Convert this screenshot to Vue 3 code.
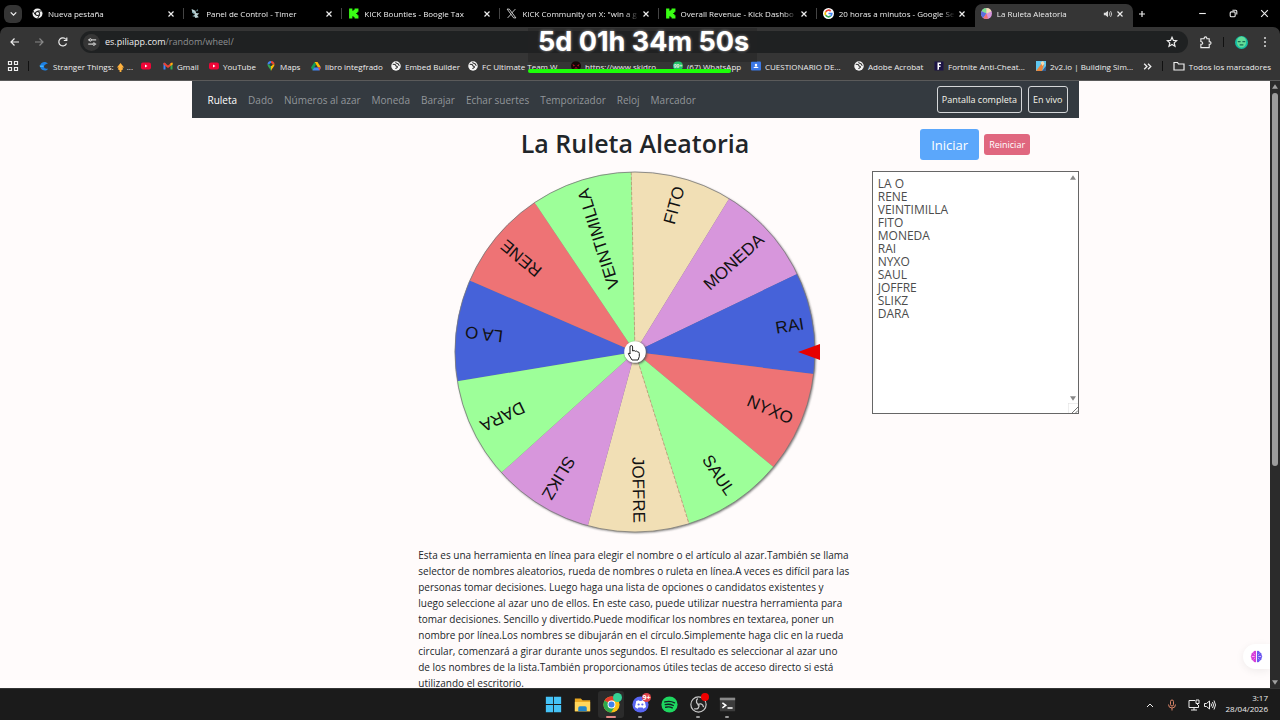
<script setup>
import { ref, computed } from 'vue'

const tabs = [
  { icon: 'chrome-mono', title: 'Nueva pestaña' },
  { icon: 'timer', title: 'Panel de Control - Timer' },
  { icon: 'kick', title: 'KICK Bounties - Boogie Tax' },
  { icon: 'x', title: 'KICK Community on X: "win a g' },
  { icon: 'kick', title: 'Overall Revenue - Kick Dashbo' },
  { icon: 'google', title: '20 horas a minutos - Google Se' },
  { icon: 'wheel', title: 'La Ruleta Aleatoria', active: true },
]

const bookmarks = [
  { icon: 'curseblue', title: 'Stranger Things: ', extra: true },
  { icon: 'youtube', title: '' },
  { icon: 'gmail', title: 'Gmail' },
  { icon: 'youtube', title: 'YouTube' },
  { icon: 'maps', title: 'Maps' },
  { icon: 'drive', title: 'libro integfrado' },
  { icon: 'globe', title: 'Embed Builder' },
  { icon: 'globe', title: 'FC Ultimate Team W...' },
  { icon: 'skull', title: 'https://www.skidro...' },
  { icon: 'whatsapp', title: '(67) WhatsApp', count: '99+' },
  { icon: 'classroom', title: 'CUESTIONARIO DE...' },
  { icon: 'globe', title: 'Adobe Acrobat' },
  { icon: 'fortnite', title: 'Fortnite Anti-Cheat...' },
  { icon: 'build', title: '2v2.io | Building Sim...' },
]

const links = ['Ruleta', 'Dado', 'Números al azar', 'Moneda', 'Barajar', 'Echar suertes', 'Temporizador', 'Reloj', 'Marcador']

const names = ref('LA O\nRENE\nVEINTIMILLA\nFITO\nMONEDA\nRAI\nNYXO\nSAUL\nJOFFRE\nSLIKZ\nDARA')
const palette = ['#4662d9', '#ee7375', '#9dff99', '#f1dfb5', '#d796dc']
const tints = [0, 1, 2, 3, 4, 0, 1, 2, 3, 4, 2]

const R = 180
const slices = computed(() => {
  const list = names.value.split('\n').filter(Boolean)
  const step = 360 / list.length
  const point = (a) => {
    const t = (a * Math.PI) / 180
    return `${(R * Math.cos(t)).toFixed(2)} ${(R * Math.sin(t)).toFixed(2)}`
  }
  return list.map((name, i) => {
    const from = 170.65 + i * step
    return {
      name,
      fill: palette[tints[i % tints.length]],
      d: `M0 0L${point(from)}A${R} ${R} 0 0 1 ${point(from + step)}Z`,
      turn: `rotate(${(from + step / 2).toFixed(2)})`,
    }
  })
})

const about = [
  'Esta es una herramienta en línea para elegir el nombre o el artículo al azar.También se llama',
  'selector de nombres aleatorios, rueda de nombres o ruleta en línea.A veces es difícil para las',
  'personas tomar decisiones. Luego haga una lista de opciones o candidatos existentes y',
  'luego seleccione al azar uno de ellos. En este caso, puede utilizar nuestra herramienta para',
  'tomar decisiones. Sencillo y divertido.Puede modificar los nombres en textarea, poner un',
  'nombre por línea.Los nombres se dibujarán en el círculo.Simplemente haga clic en la rueda',
  'circular, comenzará a girar durante unos segundos. El resultado es seleccionar al azar uno',
  'de los nombres de la lista.También proporcionamos útiles teclas de acceso directo si está',
  'utilizando el escritorio.',
]

const apps = [
  { icon: 'windows', label: 'Inicio' },
  { icon: 'files', label: 'Explorador' },
  { icon: 'chrome', label: 'Chrome', state: 'active' },
  { icon: 'discord', label: 'Discord', state: 'open' },
  { icon: 'spotify', label: 'Spotify' },
  { icon: 'obs', label: 'OBS', state: 'open' },
  { icon: 'terminal', label: 'Terminal', state: 'open' },
]
</script>

<template>
  <div class="screen">
    <svg class="sprites" aria-hidden="true">
      <symbol id="chrome-mono" viewBox="0 0 20 20"><circle cx="10" cy="10" r="9" fill="#f2f2f2" /><circle cx="10" cy="10" r="4.6" fill="#111" /><circle cx="10" cy="10" r="2.9" fill="#f2f2f2" /><path d="M10 5.4h8M6 12.3L2 5.5M14 12.3L10 19" stroke="#111" stroke-width="1.8" /></symbol>
      <symbol id="timer" viewBox="0 0 20 20"><path d="M3 2l7 3 1 4 6 1-4 3 3 4-6 1-3-4 2-3-5-3z" fill="#b9d0d2" /><path d="M4 7l3 3M14 3l-2 3M5 15l3-1" stroke="#6f9ba3" stroke-width="2" /></symbol>
      <symbol id="kick" viewBox="0 0 20 20"><path d="M2 1h6v4h2V3h2V1h7v6h-2v2h-2v2h2v2h2v6h-7v-2h-2v-2H8v4H2z" fill="#39ff14" /></symbol>
      <symbol id="x" viewBox="0 0 20 20"><path d="M2 2h4l12 16h-4zM17 2l-7 7.500M3 18l6.500-7" fill="none" stroke="#ddd" stroke-width="1.600" /></symbol>
      <symbol id="google" viewBox="0 0 20 20"><circle cx="10" cy="10" r="10" fill="#fff" /><g fill="none" stroke-width="3"><path d="M14 5.500A6 6 0 0 0 4.800 7" stroke="#ea4335" /><path d="M4.800 7a6 6 0 0 0 0 6" stroke="#fbbc05" /><path d="M4.800 13A6 6 0 0 0 14 14.500" stroke="#34a853" /><path d="M14 14.500a6 6 0 0 0 2-4.500h-6" stroke="#4285f4" /></g></symbol>
      <symbol id="wheel" viewBox="0 0 20 20"><circle cx="10" cy="10" r="10" fill="#d796dc" /><path d="M10 10L10 0A10 10 0 0 0 1 6z" fill="#7be08d" /><path d="M10 10L1 6a10 10 0 0 0 3 12z" fill="#5a6fe0" /><path d="M10 10L10 0a10 10 0 0 1 9 6z" fill="#f1dfb5" /><path d="M10 10L4 18a10 10 0 0 0 9 1z" fill="#ee7375" /></symbol>
      <symbol id="curseblue" viewBox="0 0 20 20"><path d="M18 5C14 0 5 1 3 7s2 12 9 12c3 0 5-1 6-4-4 1-8 0-8-4 0-3 3-5 8-6z" fill="#1e7fe0" /><path d="M1 9h8v3H2z" fill="#3fb2ff" /></symbol>
      <symbol id="youtube" viewBox="0 0 20 20"><rect y="3" width="20" height="14" rx="4" fill="#f00637" /><path d="M8 7l5 3-5 3z" fill="#fff" /></symbol>
      <symbol id="gmail" viewBox="0 0 20 20"><path d="M1 4h4v13H1z" fill="#4285f4" /><path d="M15 4h4v13h-4z" fill="#34a853" /><path d="M1 4l2-1 7 6 7-6 2 1v3l-9 7-9-7z" fill="#ea4335" /><path d="M15 5l4-2v4l-4 3z" fill="#fbbc05" /></symbol>
      <symbol id="maps" viewBox="0 0 20 20"><path d="M10 0a7 7 0 0 0-7 7h7z" fill="#4285f4" /><path d="M10 0a7 7 0 0 1 7 7h-7z" fill="#ea4335" /><path d="M3 7c0 4 4 6 7 13V7z" fill="#34a853" /><path d="M17 7c0 4-4 6-7 13V7z" fill="#fbbc05" /><circle cx="10" cy="7" r="3" fill="#333" /></symbol>
      <symbol id="drive" viewBox="0 0 20 20"><path d="M7 2h6l7 11h-6z" fill="#fbbc05" /><path d="M7 2l3 5-7 12-3-6z" fill="#0f9d58" /><path d="M6 13h14l-3 6H3z" fill="#4285f4" /><path d="M14 13h6l-3 6z" fill="#ea4335" /></symbol>
      <symbol id="globe" viewBox="0 0 20 20"><circle cx="10" cy="10" r="9.500" fill="#f4f4f4" /><path d="M3.500 7c3-1 6 0 6 2s3 1 3.500 3-3.500 1-3.500 4M10 2c-1 2 1 3 3 3s1 3 4 4" fill="none" stroke="#303030" stroke-width="2.200" /></symbol>
      <symbol id="skull" viewBox="0 0 20 20"><circle cx="10" cy="10" r="10" fill="#160507" /><path d="M3 6l5 3-3 2zM17 6l-5 3 3 2zM6 15l4-3 4 3" fill="#b21425" /></symbol>
      <symbol id="whatsapp" viewBox="0 0 20 20"><circle cx="10" cy="10" r="10" fill="#25c268" /></symbol>
      <symbol id="classroom" viewBox="0 0 20 20"><rect y="1" width="20" height="18" rx="2" fill="#3b78e7" /><circle cx="10" cy="8" r="2.500" fill="#fff" /><path d="M5 14c1-4 9-4 10 0z" fill="#fff" /></symbol>
      <symbol id="fortnite" viewBox="0 0 20 20"><path d="M1 1h18v18H1z" fill="#1c1446" /><path d="M7 3h7v3h-4v3h3v3h-3v5l-3 1z" fill="#fff" /></symbol>
      <symbol id="build" viewBox="0 0 20 20"><rect width="20" height="20" fill="#5fc6ef" /><path d="M0 20L12 4l4 3-4 13z" fill="#e8863c" /><path d="M9 3l5-3 3 5-4 5z" fill="#f7d9ae" /><path d="M12 20l8-10v10z" fill="#355a8c" /></symbol>
      <symbol id="windows" viewBox="0 0 20 20"><path d="M1 1h8.500v8.500H1zM10.500 1H19v8.500h-8.500zM1 10.500h8.500V19H1zM10.500 10.500H19V19h-8.500z" fill="#45c3f7" /></symbol>
      <symbol id="files" viewBox="0 0 20 20"><path d="M1 3h7l2 2h9v13H1z" fill="#e9a822" /><path d="M1 7h18v11H1z" fill="#ffd65c" /><path d="M5 18v-4q0-2 2-2h6q2 0 2 2v4z" fill="#2285c9" /></symbol>
      <symbol id="chrome" viewBox="0 0 20 20"><circle cx="10" cy="10" r="9.500" fill="#fbc116" /><path d="M10 10L1.800 5.200A9.500 9.500 0 0 1 18.200 5.200H10z" fill="#e33b2e" /><path d="M1.800 5.200A9.500 9.500 0 0 0 9.500 19.500L14 12.300l-4-2z" fill="#2da94f" /><circle cx="10" cy="10" r="4.600" fill="#fff" /><circle cx="10" cy="10" r="3.500" fill="#4081ec" /></symbol>
      <symbol id="discord" viewBox="0 0 20 20"><circle cx="10" cy="10" r="9.500" fill="#5865f2" /><path d="M5 6l3-1 1 1h2l1-1 3 1 1.500 7-3 2-1-1.500h-5L6.500 15l-3-2z" fill="#fff" /><circle cx="7.800" cy="10" r="1.300" fill="#5865f2" /><circle cx="12.200" cy="10" r="1.300" fill="#5865f2" /></symbol>
      <symbol id="spotify" viewBox="0 0 20 20"><circle cx="10" cy="10" r="9.500" fill="#1ed760" /><path d="M4.500 7c4-1.200 8-.8 11.500 1M5 10.200c3.500-1 6.500-.6 9.500 1M5.500 13.200c3-.8 5.500-.5 7.800.8" fill="none" stroke="#122" stroke-width="1.600" stroke-linecap="round" /></symbol>
      <symbol id="obs" viewBox="0 0 20 20"><circle cx="10" cy="10" r="9" fill="#222" stroke="#c8c8c8" stroke-width="1.400" /><g fill="none" stroke="#c8c8c8" stroke-width="1.600"><path d="M9 3c-3 3-1 7 2 7M16 13c-1-4-5-5-7-2M5 15c4 1 7-2 5-5" /></g></symbol>
      <symbol id="terminal" viewBox="0 0 20 20"><rect x="1" y="2" width="18" height="16" rx="1" fill="#3c3c3c" /><path d="M1 2h18v3H1z" fill="#8a8a8a" /><path d="M4 8l4 3-4 3M10 14h6" fill="none" stroke="#fff" stroke-width="1.800" /></symbol>
    </svg>

    <header class="browser">
      <div class="tabstrip">
        <button class="tabsearch" aria-label="Buscar pestañas"><svg viewBox="0 0 10 10"><path d="M2.500 4L5 6.500 7.500 4" /></svg></button>
        <div class="tabs">
          <div v-for="(t, i) in tabs" :key="i" class="tab" :class="{ active: t.active }">
            <svg class="favicon"><use :href="'#' + t.icon" /></svg>
            <span class="tabtitle">{{ t.title }}</span>
            <svg v-if="t.active" class="sound" viewBox="0 0 12 12"><path d="M1 4.500h2L6 2v8L3 7.500H1z" fill="#ddd" /><path d="M7.500 4q1.500 2 0 4M9 2.500q3 3.500 0 7" fill="none" stroke="#ddd" /></svg>
            <button class="close" aria-label="Cerrar"><svg viewBox="0 0 10 10"><path d="M2.500 2.500l5 5M7.500 2.500l-5 5" /></svg></button>
          </div>
        </div>
        <button class="newtab" aria-label="Nueva pestaña"><svg viewBox="0 0 10 10"><path d="M5 2v6M2 5h6" /></svg></button>
        <div class="window">
          <button aria-label="Minimizar"><svg viewBox="0 0 10 10"><path d="M2 5h6" /></svg></button>
          <button aria-label="Restaurar"><svg viewBox="0 0 10 10"><rect x="2" y="3.500" width="4.500" height="4.500" rx="1" /><path d="M4 2h3q1 0 1 1v3" /></svg></button>
          <button aria-label="Cerrar ventana"><svg viewBox="0 0 10 10"><path d="M2 2l6 6M8 2L2 8" /></svg></button>
        </div>
      </div>

      <div class="toolbar">
        <div class="history">
          <button aria-label="Atrás"><svg viewBox="0 0 12 12"><path d="M10 6H2M5.500 2.500L2 6l3.500 3.500" /></svg></button>
          <button aria-label="Adelante" class="dim"><svg viewBox="0 0 12 12"><path d="M2 6h8M6.500 2.500L10 6 6.500 9.500" /></svg></button>
          <button aria-label="Recargar"><svg viewBox="0 0 12 12"><path d="M9.500 7.500A4 4 0 1 1 9 3.500M9.800 1.500v3h-3" /></svg></button>
        </div>
        <div class="urlbar">
          <span class="site"><svg viewBox="0 0 12 12"><path d="M1.500 3.500h1M6 3.500h5M1.500 8.500h5M10 8.500h1" /><circle cx="4" cy="3.500" r="1.400" /><circle cx="8.300" cy="8.500" r="1.400" /></svg></span>
          <span class="url">es.piliapp.com<i>/random/wheel/</i></span>
          <svg class="star" viewBox="0 0 12 12"><path d="M6 1.300l1.400 3.100 3.300.3-2.500 2.200.8 3.300L6 8.500l-3 1.700.8-3.300L1.300 4.700l3.300-.3z" /></svg>
        </div>
        <svg class="puzzle" viewBox="0 0 14 14"><path d="M2 3h3.500q0-2 1.500-2t1.500 2H11v3q2 0 2 1.500T11 9v3.500H2V9q2 0 2-1.300T2 6z" /></svg>
        <i class="divider"></i>
        <svg class="avatar" viewBox="0 0 14 14"><circle cx="7" cy="7" r="7" fill="#15bfa4" /><ellipse cx="7" cy="6.500" rx="5" ry="6" fill="#63dc98" /><path d="M3 6h3M8 6h3M5 9.500h4" stroke="#176b55" stroke-width="1.200" /></svg>
        <svg class="dots" viewBox="0 0 4 14"><circle cx="2" cy="3" r="1" /><circle cx="2" cy="7" r="1" /><circle cx="2" cy="11" r="1" /></svg>
      </div>

      <nav class="bookmarks">
        <svg class="grid" viewBox="0 0 12 12"><path d="M1.500 1.500h3v3h-3zM7.500 1.500h3v3h-3zM1.500 7.500h3v3h-3zM7.500 7.500h3v3h-3z" /></svg>
        <i class="divider"></i>
        <div class="marks">
          <a v-for="(b, i) in bookmarks" :key="i" href="#" :aria-label="b.title || 'YouTube'">
            <svg class="mark"><use :href="'#' + b.icon" /></svg>
            <b v-if="b.count" class="count">{{ b.count }}</b>
            <span v-if="b.title">{{ b.title }}<template v-if="b.extra"><svg class="arrowup" viewBox="0 0 10 10"><path d="M5 0l4 5H7l1 2-2 1v2H4V8L2 7l1-2H1z" fill="#ffb23e" /></svg> ...</template></span>
          </a>
        </div>
        <svg class="more" viewBox="0 0 10 10"><path d="M2 2.500L4.500 5 2 7.500M5.500 2.500L8 5 5.500 7.500" /></svg>
        <i class="divider"></i>
        <a href="#" class="all"><svg viewBox="0 0 12 12"><path d="M1 2.500h3.500l1 1.500H11v6H1z" /></svg>Todos los marcadores</a>
      </nav>

      <div class="countdown"><strong>5d 01h 34m 50s</strong></div>
      <div class="progress"></div>
    </header>

    <div class="viewport">
      <main class="page">
        <div class="container">
          <nav class="sitenav">
            <a v-for="(l, i) in links" :key="l" href="#" :class="{ current: i === 0 }">{{ l }}</a>
            <div class="actions">
              <button>Pantalla completa</button>
              <button>En vivo</button>
            </div>
          </nav>
          <div class="columns">
            <section class="center">
              <h1>La Ruleta Aleatoria</h1>
              <svg class="ruleta" viewBox="-190 -184 380 368" role="img" aria-label="Ruleta">
                <circle class="shade" cx="1" cy="1" r="180" />
                <g class="slices"><path v-for="s in slices" :key="s.name" :d="s.d" :fill="s.fill" /></g>
                <path class="seam" d="M-3.800-180L0 0L54 172" />
                <circle class="rim" r="180" />
                <g v-for="s in slices" :key="s.name" :transform="s.turn"><text class="slicename" x="171" y="5" text-anchor="end">{{ s.name }}</text></g>
                <circle class="hubshade" cx="1" cy="1" r="11" />
                <circle r="10.800" fill="#fff" />
                <path d="M163 0l22-8v16z" fill="#e60000" />
                <path class="hand" d="M-5-5q0-1.500 1.300-1.500T-2.400-5v4l1.500-.5 1.300.8 1.400-.2 1 .9q1.500-.2 1.500 1.500v3L3 8h-6l-3-5q-1.500-2 .3-2L-5 2z" />
              </svg>
              <p class="about"><span v-for="line in about" :key="line">{{ line }} </span></p>
            </section>
            <aside class="side">
              <div class="controls">
                <button class="start">Iniciar</button>
                <button class="reset">Reiniciar</button>
              </div>
              <div class="namebox">
                <textarea v-model="names" aria-label="Nombres" spellcheck="false"></textarea>
                <svg class="up" viewBox="0 0 8 6"><path d="M4 0l4 6H0z" /></svg>
                <svg class="down" viewBox="0 0 8 6"><path d="M0 0h8L4 6z" /></svg>
                <svg class="grip" viewBox="0 0 10 10"><path d="M0 10V0h10" stroke="#ddd" /><path d="M4 10l6-6M7.500 10L10 7.500" stroke="#777" /></svg>
              </div>
            </aside>
          </div>
        </div>
        <button class="brain" aria-label="Asistente">
          <svg viewBox="0 0 14 14"><path d="M6.500 1Q4 0 3.500 2.500 1 3 1.500 5.500 0 7 1.500 8.500 1 11 3.500 11.500 4.500 14 6.500 13z" fill="#d63fd8" /><path d="M7.500 1Q10 0 10.500 2.500 13 3 12.500 5.500 14 7 12.500 8.500 13 11 10.500 11.500 9.500 14 7.500 13z" fill="#6a58ef" /><path d="M2 7h3M9 7h3M4 4l1 1M10 4L9 5M4 10l1-1M10 10L9 9" stroke="#ffd5ff" stroke-width=".8" /></svg>
        </button>
      </main>
      <div class="scrollbar">
        <svg viewBox="0 0 8 6"><path d="M4 0l4 6H0z" /></svg>
        <div class="track"><i></i></div>
        <svg viewBox="0 0 8 6"><path d="M0 0h8L4 6z" /></svg>
      </div>
    </div>

    <footer class="taskbar">
      <div class="apps">
        <button v-for="a in apps" :key="a.icon" :class="a.state" :aria-label="a.label">
          <svg><use :href="'#' + a.icon" /></svg>
          <b v-if="a.icon === 'discord'" class="badge">9+</b>
          <b v-if="a.icon === 'obs'" class="badge rec"></b>
          <b v-if="a.icon === 'chrome'" class="badge face"></b>
        </button>
      </div>
      <div class="tray">
        <svg viewBox="0 0 12 12"><path d="M3 8l3-3 3 3" /></svg>
        <svg class="mic" viewBox="0 0 12 12"><rect x="4.500" y="1" width="3" height="6" rx="1.500" /><path d="M2.500 5.500q0 3.500 3.500 3.500t3.500-3.500M6 9v2.500" /></svg>
        <div class="pair">
          <svg viewBox="0 0 12 12"><path d="M7 1.500H1v7h9.500V6M3 11h6M6 8.500V11M8 1h3v3.500H8zM9.500 4.500V6" /></svg>
          <svg viewBox="0 0 12 12"><path d="M.5 4.500h2l3-2.500v8l-3-2.500h-2zM7 4.500q1 1.500 0 3M8.500 3q2 3 0 6M10 1.500q3 4.500 0 9" /></svg>
        </div>
        <time>3:17<br />28/04/2026</time>
      </div>
    </footer>
  </div>
</template>

<style>
html,
body {
  background: #1b1b1b;
}
</style>

<style scoped>
* {
  box-sizing: border-box;
}
.screen {
  display: flex;
  flex-direction: column;
  height: 100vh;
  overflow: hidden;
  font-family: 'Open Sans', 'Noto Sans', sans-serif;
  font-size: 8px;
  color: #eee;
}
.sprites {
  position: absolute;
  width: 0;
  height: 0;
}
button {
  font: inherit;
  color: inherit;
  background: none;
  border: 0;
  padding: 0;
}
a {
  color: inherit;
  text-decoration: none;
}
i {
  font-style: normal;
}
svg {
  display: block;
  flex: none;
}
button svg,
.more,
.all svg,
.grid,
.star,
.puzzle,
.site svg,
.tray svg {
  fill: none;
  stroke: currentColor;
  stroke-width: 1.2;
}

/* Browser window */
.browser {
  position: relative;
  flex: none;
  background: #000;
}
.tabstrip {
  display: flex;
  align-items: center;
  height: 27px;
}
.tabsearch {
  display: grid;
  place-items: center;
  width: 18px;
  height: 18px;
  margin: 0 4px;
  border-radius: 6px;
  background: #353535;
}
.tabsearch svg {
  width: 11px;
  height: 11px;
}
.tabs {
  display: flex;
  flex: 1;
  height: 100%;
  align-items: flex-end;
  max-width: 1107px;
}
.tab {
  position: relative;
  display: flex;
  flex: 1;
  min-width: 0;
  align-items: center;
  gap: 5px;
  height: 23px;
  padding: 0 8px 4px 6px;
}
.tab:not(.active)::after {
  content: '';
  position: absolute;
  right: 0;
  top: 4px;
  width: 1px;
  height: 11px;
  background: #444;
}
.tab:nth-last-child(2)::after {
  display: none;
}
.tab.active {
  background: #353535;
  border-radius: 7px 7px 0 0;
}
.favicon {
  width: 11px;
  height: 11px;
}
.tabtitle {
  flex: 1;
  white-space: nowrap;
  mask-image: linear-gradient(90deg, #000 88%, transparent);
}
.sound {
  width: 10px;
  height: 10px;
}
.close svg,
.newtab svg {
  width: 10px;
  height: 10px;
}
.close {
  margin-left: -3px;
}
.newtab {
  margin-left: 4px;
}
.window {
  display: flex;
  gap: 20px;
  margin-left: auto;
  padding-right: 10px;
}
.window svg {
  width: 11px;
  height: 11px;
  stroke-width: 1;
}
.toolbar {
  display: flex;
  align-items: center;
  height: 30px;
  padding: 0 13px 0 9px;
  background: #353535;
  border-radius: 7px 7px 0 0;
}
.history {
  display: flex;
  gap: 12px;
  margin-right: 11px;
}
.history svg {
  width: 12px;
  height: 12px;
}
.history .dim {
  color: #888;
}
.urlbar {
  display: flex;
  flex: 1;
  align-items: center;
  gap: 5px;
  height: 22px;
  padding: 0 10px 0 3px;
  border-radius: 11px;
  background: #1f2122;
}
.site {
  display: grid;
  place-items: center;
  width: 17px;
  height: 17px;
  border-radius: 50%;
  background: #353535;
}
.site svg {
  width: 10px;
  height: 10px;
}
.url {
  flex: 1;
  padding-bottom: 2px;
  font-size: 9px;
}
.url i {
  color: #8d8f91;
}
.star {
  width: 12px;
  height: 12px;
}
.puzzle {
  width: 13px;
  height: 13px;
  margin-left: 11px;
}
.divider {
  width: 1px;
  height: 10px;
  background: #111;
}
.toolbar .divider {
  margin: 0 11px;
}
.avatar {
  width: 13px;
  height: 13px;
}
.dots {
  width: 4px;
  height: 14px;
  margin-left: 15px;
  fill: #ddd;
}
.bookmarks {
  display: flex;
  align-items: center;
  height: 24px;
  padding: 0 9px 5px 7px;
  border-bottom: 1px solid #5a5a5a;
  background: #353535;
  white-space: nowrap;
}
.grid {
  width: 12px;
  height: 12px;
}
.bookmarks .divider {
  margin: 0 10px 0 9px;
}
.marks {
  display: grid;
  flex: 1;
  grid-template-columns: 102px 22px 46px 57px 45px 80px 77px 103px 102px 78px 103px 80px 102px auto;
}
.marks a,
.all {
  position: relative;
  display: flex;
  align-items: center;
  gap: 4px;
}
.mark {
  width: 10px;
  height: 10px;
}
.count {
  position: absolute;
  left: 0;
  width: 10px;
  font-size: 5px;
  text-align: center;
}
.arrowup {
  display: inline-block;
  width: 9px;
  height: 9px;
  vertical-align: -2px;
}
.more {
  width: 11px;
  height: 11px;
}
.all svg {
  width: 12px;
  height: 12px;
}
.countdown {
  position: absolute;
  top: 28px;
  left: 528px;
  width: 229px;
  height: 34px;
  padding-left: 10px;
  background: #2227;
  color: #fff;
  font-family: Inter, sans-serif;
  font-size: 27px;
  line-height: 28px;
  white-space: nowrap;
  text-shadow: 0 0 3px #aaa;
}
.progress {
  position: absolute;
  top: 69px;
  left: 528px;
  width: 203px;
  height: 4px;
  border-radius: 2px;
  background: #1cff08;
}

/* Web page */
.viewport {
  display: flex;
  flex: 1;
  min-height: 0;
}
.page {
  position: relative;
  flex: 1;
  overflow: hidden;
  background: #fffbfb;
  color: #212529;
}
.container {
  max-width: 887px;
  margin: 0 auto;
}
.sitenav {
  display: flex;
  align-items: center;
  gap: 11px;
  height: 37px;
  padding: 0 11px 0 16px;
  background: #343a40;
  color: #92969a;
  font-size: 10px;
}
.sitenav .current {
  color: #fff;
}
.actions {
  display: flex;
  gap: 6px;
  margin-left: auto;
}
.actions button {
  height: 27px;
  padding: 0 4px;
  border: 1px solid #d5d7d9;
  border-radius: 3px;
  color: #f4f4ea;
  font-size: 9px;
}
.columns {
  display: grid;
  grid-template-columns: 1fr 2fr 1fr;
}
.center {
  grid-column: 2;
}
h1 {
  margin: 7px 0;
  font-size: 25px;
  font-weight: 600;
  line-height: 36px;
  text-align: center;
}
.ruleta {
  width: 380px;
  max-width: 100%;
  margin: 0 auto;
}
.shade {
  fill: #777;
  filter: blur(1px);
}
.seam {
  fill: none;
  stroke: #b99a70;
  stroke-width: 0.8;
  stroke-dasharray: 3 2;
}
.rim {
  fill: none;
  stroke: #777;
  stroke-width: 0.8;
}
.slicename {
  font-family: 'Liberation Sans', Arial, sans-serif;
  font-size: 17px;
  fill: #111;
}
.hubshade {
  fill: #555;
  filter: blur(1px);
}
.hand {
  fill: #fff;
  stroke: #222;
  stroke-width: 1;
}
.about {
  margin: 11px 5px 0;
  font-size: 10px;
  line-height: 16px;
}
.about span {
  display: block;
  white-space: nowrap;
}
.side {
  padding-left: 15px;
}
.controls {
  display: flex;
  align-items: center;
  justify-content: center;
  gap: 5px;
  margin: 11px 0;
}
.start,
.reset {
  border-radius: 3px;
  color: #fff;
}
.start {
  height: 31px;
  padding: 0 11px;
  background: #5ba7fb;
  font-size: 13px;
}
.reset {
  height: 21px;
  padding: 0 5px;
  background: #e0677f;
  font-size: 9px;
}
.namebox {
  position: relative;
}
textarea {
  display: block;
  width: 100%;
  height: 243px;
  padding: 5px;
  border: 1px solid #666;
  border-radius: 0;
  outline: 0;
  resize: none;
  overflow: hidden;
  background: #fff;
  color: #4c4c4c;
  font: 12px/13px 'Open Sans', 'Noto Sans', sans-serif;
}
.up,
.down,
.grip {
  position: absolute;
  right: 3px;
  width: 6px;
  height: 5px;
  fill: #888;
}
.up {
  top: 4px;
}
.down {
  bottom: 13px;
}
.grip {
  right: 1px;
  bottom: 1px;
  width: 10px;
  height: 10px;
  fill: none;
}
.brain {
  position: absolute;
  right: 0;
  bottom: 19px;
  display: flex;
  align-items: center;
  width: 27px;
  height: 25px;
  padding-left: 7px;
  border-radius: 13px 0 0 13px;
  background: #fff;
  box-shadow: 0 2px 8px #0001;
}
.brain svg {
  width: 13px;
  height: 13px;
  stroke: none;
}
.scrollbar {
  display: flex;
  flex-direction: column;
  align-items: center;
  width: 10px;
  padding: 3px 0;
  background: #2b2b2b;
}
.scrollbar svg {
  width: 6px;
  height: 5px;
  fill: #a0a0a0;
}
.track {
  flex: 1;
  width: 6px;
  padding: 4px 0;
}
.track i {
  display: block;
  height: 64%;
  border-radius: 3px;
  background: #9c9c9c;
}

/* Taskbar */
.taskbar {
  display: grid;
  grid-template-columns: 1fr auto 1fr;
  align-items: center;
  flex: none;
  height: 32px;
  border-top: 1px solid #333;
  background: #1b1b1b;
}
.apps {
  display: flex;
  grid-column: 2;
  gap: 3px;
}
.apps button {
  position: relative;
  display: grid;
  place-items: center;
  width: 26px;
  height: 27px;
  border-radius: 3px;
}
.apps svg {
  width: 17px;
  height: 17px;
  stroke: none;
}
.apps .active {
  background: #2b2b2b;
}
.apps .open::after,
.apps .active::after {
  content: '';
  position: absolute;
  bottom: 0;
  width: 4px;
  height: 2px;
  border-radius: 1px;
  background: #999;
}
.apps .active::after {
  width: 10px;
  background: #e58a86;
}
.badge {
  position: absolute;
  top: 2px;
  right: 2px;
  width: 9px;
  height: 9px;
  border-radius: 50%;
  background: #e0434b;
  color: #fff;
  font-size: 7px;
  line-height: 9px;
  text-align: center;
}
.badge.rec {
  width: 8px;
  height: 8px;
  background: #f00000;
}
.badge.face {
  background: #35cf94;
}
.tray {
  display: flex;
  grid-column: 3;
  align-items: center;
  justify-content: flex-end;
  gap: 10px;
  padding-right: 12px;
}
.tray svg {
  width: 12px;
  height: 12px;
  stroke-width: 1;
}
.tray .mic {
  color: #d98468;
}
.pair {
  display: flex;
  gap: 4px;
}
time {
  padding-bottom: 3px;
  font-size: 8px;
  line-height: 11px;
  text-align: right;
}
</style>
